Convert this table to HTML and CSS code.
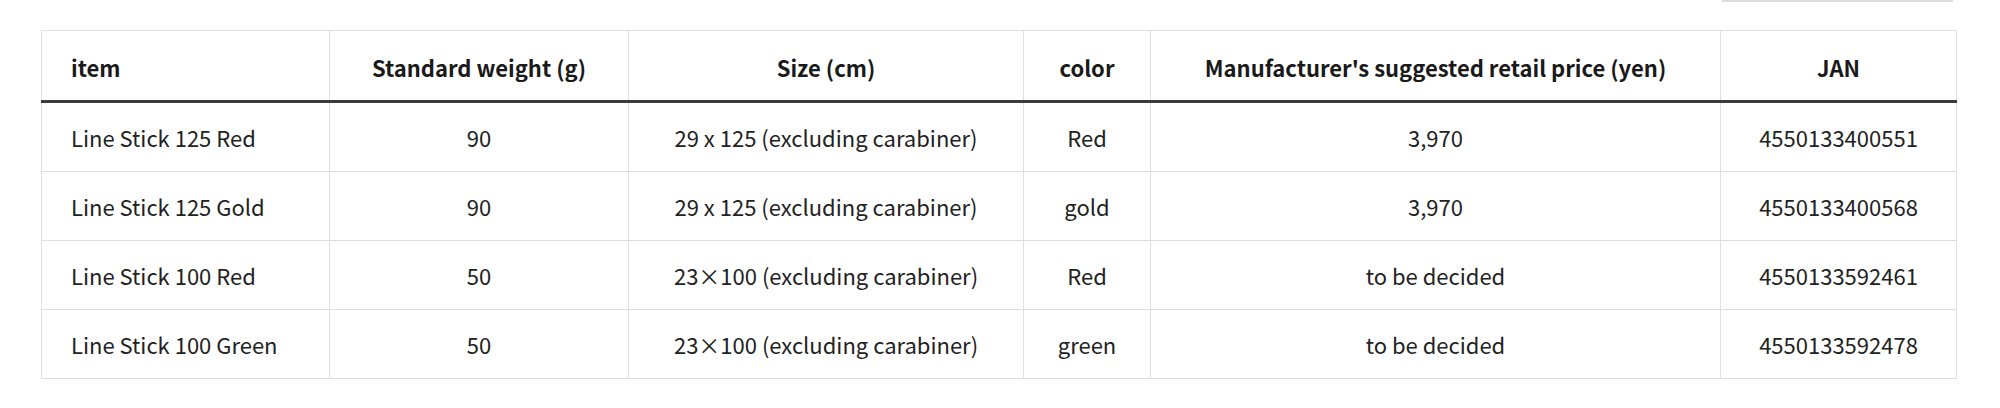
FILE: index.html
```html
<!DOCTYPE html>
<html lang="en">
<head>
<meta charset="utf-8">
<title>Line Stick specifications</title>
<link rel="stylesheet" href="styles.css">
</head>
<body>
<div class="page">
  <div class="toolbar"><div class="toolbar-box"></div></div>
  <table class="spec">
    <colgroup>
      <col class="c-item">
      <col class="c-weight">
      <col class="c-size">
      <col class="c-color">
      <col class="c-price">
      <col class="c-jan">
    </colgroup>
    <thead>
      <tr>
        <th class="left">item</th>
        <th>Standard weight (g)</th>
        <th>Size (cm)</th>
        <th>color</th>
        <th>Manufacturer's suggested retail price (yen)</th>
        <th>JAN</th>
      </tr>
    </thead>
    <tbody>
      <tr>
        <td class="left">Line Stick 125 Red</td>
        <td>90</td>
        <td>29 x 125 (excluding carabiner)</td>
        <td>Red</td>
        <td>3,970</td>
        <td>4550133400551</td>
      </tr>
      <tr>
        <td class="left">Line Stick 125 Gold</td>
        <td>90</td>
        <td>29 x 125 (excluding carabiner)</td>
        <td>gold</td>
        <td>3,970</td>
        <td>4550133400568</td>
      </tr>
      <tr>
        <td class="left">Line Stick 100 Red</td>
        <td>50</td>
        <td>23×100 (excluding carabiner)</td>
        <td>Red</td>
        <td>to be decided</td>
        <td>4550133592461</td>
      </tr>
      <tr>
        <td class="left">Line Stick 100 Green</td>
        <td>50</td>
        <td>23×100 (excluding carabiner)</td>
        <td>green</td>
        <td>to be decided</td>
        <td>4550133592478</td>
      </tr>
    </tbody>
  </table>
</div>
</body>
</html>
```

FILE: styles.css
```css
html, body {
  margin: 0;
  padding: 0;
  background: #ffffff;
}

.page {
  padding: 0 44px 0 41px;
  font-family: "Noto Sans CJK JP", "Noto Sans", sans-serif;
  color: #222222;
}

.toolbar {
  display: flex;
  justify-content: flex-end;
  height: 30px;
  padding-right: 3px;
}

.toolbar-box {
  width: 231px;
  height: 0;
  border-bottom: 2px solid #dcdcdc;
}

.spec {
  width: 1915px;
  border-collapse: collapse;
  table-layout: fixed;
  border: 1px solid #e0e0e0;
}

.c-item { width: 288px; }
.c-weight { width: 299px; }
.c-size { width: 395px; }
.c-color { width: 127px; }
.c-price { width: 570px; }
.c-jan { width: 236px; }

.spec th,
.spec td {
  text-align: center;
  vertical-align: middle;
  border-left: 1px solid #e0e0e0;
  border-right: 1px solid #e0e0e0;
  padding: 0 8px;
  font-size: 22px;
  line-height: 1.2;
  white-space: nowrap;
}

.spec th {
  height: 66px;
  padding-top: 3px;
  font-weight: 700;
  color: #1a1a1a;
  border-bottom: 3px solid #3c3c3c;
}

.spec td {
  height: 68px;
  font-weight: 400;
  border-bottom: 1px solid #dedede;
}

.spec .left {
  text-align: left;
  padding-left: 29px;
}
```
